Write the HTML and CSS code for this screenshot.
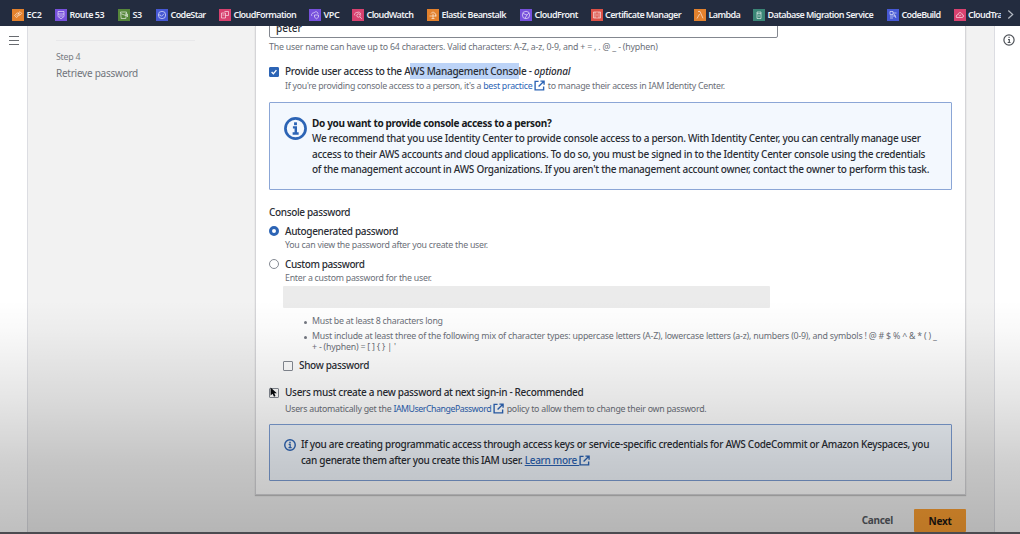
FILE: index.html
```html
<!DOCTYPE html>
<html lang="en">
<head>
<meta charset="utf-8">
<title>Create user | IAM</title>
<link rel="stylesheet" href="styles.css">
</head>
<body>
<svg width="0" height="0" class="defs">
  <symbol id="ext" viewBox="0 0 12 12"><path d="M5 1.5H1.2v9.3h9.3V7M7 1.2h4v4M11 1.2 5 7.2" fill="none" stroke="currentColor" stroke-width="1.5"/></symbol>
  <symbol id="info" viewBox="0 0 16 16"><circle cx="8" cy="8" r="7" fill="none" stroke="currentColor" stroke-width="1.9"/><path d="M6.2 7.2h2v4.2M6 11.5h4.2" fill="none" stroke="currentColor" stroke-width="1.700"/><path d="M7 3.7h2v2H7z" fill="currentColor"/></symbol>
</svg>
<nav class="favorites">
  <a class="fav ec2"><svg class="orange" viewBox="0 0 12 12"><path d="M2.700 6.500 5.500 3.700l2 2-2.800 2.800zM6 4.500 8 2.700l1.700 1.700-2.200 2.200M4.500 7l3-3"/></svg><span>EC2</span></a>
  <a class="fav r53"><svg class="purple" viewBox="0 0 12 12"><path d="M3 2.5h6v5L6 9.8 3 7.5zM3 5h6M4 7h4"/></svg><span>Route 53</span></a>
  <a class="fav s3"><svg class="green" viewBox="0 0 12 12"><path d="M2.5 3h6l-.7 6.5H3.2zM3 4.7l6.5 2.5M7 5h2.5v3"/></svg><span>S3</span></a>
  <a class="fav star"><svg class="blue" viewBox="0 0 12 12"><circle cx="6" cy="6" r="3.7"/><path d="m4 5.8 1.5 1.5L8 4.8M2.5 6h2"/></svg><span>CodeStar</span></a>
  <a class="fav cfn"><svg class="pink" viewBox="0 0 12 12"><path d="M2.5 4h4v5h-4zM5.5 2.5h4v4h-3M3.5 6h2"/></svg><span>CloudFormation</span></a>
  <a class="fav vpc"><svg class="purple" viewBox="0 0 12 12"><path d="M3 7C1.5 5 4 3.5 5 4c1-2 4-1.5 4 1M5.5 6h4v2.2l-2 1.6-2-1.6z"/></svg><span>VPC</span></a>
  <a class="fav cw"><svg class="pink" viewBox="0 0 12 12"><path d="M3 6.5C1.5 5 4 3.2 5 3.5c1.5-1 4 0 3.6 2"/><circle cx="6.5" cy="6.5" r="1.7"/><path d="m8 8 1.8 1.8"/></svg><span>CloudWatch</span></a>
  <a class="fav eb"><svg class="orange" viewBox="0 0 12 12"><path d="M2.5 7h7M4 4.5c1-2 4-1.5 4 .5 1.5 0 1.5 2 0 2M6 4.5v5M4.5 9.5h3"/></svg><span>Elastic Beanstalk</span></a>
  <a class="fav cf"><svg class="purple" viewBox="0 0 12 12"><circle cx="6" cy="6" r="3.7"/><path d="M3 4.5 7 6l2-2M7 6 5 9.3"/></svg><span>CloudFront</span></a>
  <a class="fav cm"><svg class="red" viewBox="0 0 12 12"><path d="M2.5 3h7v6h-7zM4 3v6M8 3v6M6 4.5v3"/></svg><span>Certificate Manager</span></a>
  <a class="fav lam"><svg class="orange" viewBox="0 0 12 12"><path d="M4 2.5h2L9 9.3M5.6 5 3 9.5"/></svg><span>Lambda</span></a>
  <a class="fav dms"><svg class="teal" viewBox="0 0 12 12"><path d="M4 3h4v6.5H4zM4 4.7h4M5 7h2"/></svg><span>Database Migration Service</span></a>
  <a class="fav cb"><svg class="blue" viewBox="0 0 12 12"><path d="M3 2.5h3v3H3zM6 4h3.5M3 7h6M3 9h3M7 5l2 4"/></svg><span>CodeBuild</span></a>
  <a class="fav trail"><svg class="pink" viewBox="0 0 12 12"><path d="M2.5 8.5c-1-2.5 1-3 1.5-2.6C4 2.8 8 3 8 5.5c2 0 2 3 0 3zM5 7l2-1"/></svg><span>CloudTrail</span></a>
  <svg class="more" viewBox="0 0 8 12"><path d="m1.5 1.5 5 4.5-5 4.5"/></svg>
</nav>

<div class="page">
  <aside class="rail left"><div class="burger"><i></i><i></i><i></i></div></aside>
  <aside class="steps">
    <div class="rule"></div>
    <div class="step-no small">Step 4</div>
    <div class="step-name">Retrieve password</div>
  </aside>
  <main class="content">
    <section class="panel">
      <div class="name-clip"><div class="name-input">peter</div></div>
      <div class="small constraint">The user name can have up to 64 characters. Valid characters: A-Z, a-z, 0-9, and + = , . @ _ - (hyphen)</div>

      <div class="choice provide"><span class="box on"><svg viewBox="0 0 10 10"><path d="m2 5 2.2 2.3L8 2.6"/></svg></span><span>Provide user access to the A<mark>WS Management Conso</mark>le - <em>optional</em></span></div>
      <div class="small desc provide-desc">If you're providing console access to a person, it's a <a>best practice <svg class="ext"><use href="#ext"/></svg></a> to manage their access in IAM Identity Center.</div>

      <div class="alert person">
        <svg class="big-info"><use href="#info"/></svg>
        <div>
          <b>Do you want to provide console access to a person?</b>
          <p>We recommend that you use Identity Center to provide console access to a person. With Identity Center, you can centrally manage user<br>access to their AWS accounts and cloud applications. To do so, you must be signed in to the Identity Center console using the credentials<br>of the management account in AWS Organizations. If you aren't the management account owner, contact the owner to perform this task.</p>
        </div>
      </div>

      <div class="group-label">Console password</div>
      <div class="choice auto"><span class="radio on"></span><span>Autogenerated password</span></div>
      <div class="small desc auto-desc">You can view the password after you create the user.</div>
      <div class="choice custom"><span class="radio"></span><span>Custom password</span></div>
      <div class="small desc custom-desc">Enter a custom password for the user.</div>
      <div class="password"></div>
      <ul class="rules small">
        <li class="length">Must be at least 8 characters long</li>
        <li class="mix">Must include at least three of the following mix of character types: uppercase letters (A-Z), lowercase letters (a-z), numbers (0-9), and symbols ! @ # $ % ^ &amp; * ( ) _<br>+ - (hyphen) = [ ] { } | '</li>
      </ul>
      <div class="choice show"><span class="box"></span><span>Show password</span></div>
      <div class="choice reset"><span class="box"></span><span>Users must create a new password at next sign-in - Recommended</span>
        <svg class="pointer" viewBox="0 0 8 11"><path d="M.6.5v8l2-1.7 1.4 3 1.5-.7L4.200 6.300h2.700z"/></svg>
      </div>
      <div class="small desc reset-desc">Users automatically get the <a><span class="policy">IAMUserChangePassword</span> <svg class="ext"><use href="#ext"/></svg></a> policy to allow them to change their own password.</div>

      <div class="alert keys">
        <svg class="small-info"><use href="#info"/></svg>
        <p>If you are creating programmatic access through access keys or service-specific credentials for AWS CodeCommit or Amazon Keyspaces, you<br>can generate them after you create this IAM user. <a class="learn">Learn more <svg class="ext"><use href="#ext"/></svg></a></p>
      </div>
    </section>
    <div class="actions"><span class="cancel">Cancel</span><span class="next">Next</span></div>
  </main>
  <aside class="rail right"><svg class="rail-info" viewBox="0 0 12 12"><circle cx="6" cy="6" r="5.100"/><path d="M5 5.500h1.300v3M4.700 8.500h2.800M5.500 3.400h1.200"/></svg></aside>
</div>
<div class="shade"></div>
</body>
</html>
```
FILE: styles.css
```css
* { box-sizing: border-box; }
body {
  margin: 0; width: 1020px; height: 534px; overflow: hidden; position: relative;
  display: flex; flex-direction: column;
  font: 500 10px/15.6px "Noto Sans", "Open Sans", sans-serif;
  letter-spacing: -.28px; color: #2a2d34; background: #fff;
}
p { margin: 0; }
a { color: #2c64b5; }
.defs { position: absolute; }

.favorites {
  height: 26px; flex: none; display: flex; align-items: center; padding: 3px 0 0 12px;
  background: #232c3f; color: #eef0f3; font-size: 9px; font-weight: 600;
  line-height: 14px; letter-spacing: -.6px; white-space: nowrap; position: relative;
}
.fav { display: flex; align-items: center; gap: 2.500px; color: inherit; flex: none; }
.fav svg { width: 12px; height: 12px; flex: none; fill: none; stroke: #fff; stroke-opacity: .65; stroke-width: .9; }
.fav.ec2 { width: 43px; letter-spacing: -.3px; }
.fav.r53 { width: 63px; letter-spacing: -.51px; }
.fav.s3 { width: 38px; letter-spacing: -.5px; }
.fav.star { width: 63px; }
.fav.cfn { width: 90px; }
.fav.vpc { width: 43px; letter-spacing: -.4px; }
.fav.cw { width: 75px; }
.fav.eb { width: 93px; letter-spacing: -.54px; }
.fav.cf { width: 70.500px; letter-spacing: -.55px; }
.fav.cm { width: 103.500px; }
.fav.lam { width: 59px; }
.fav.dms { width: 134px; letter-spacing: -.57px; }
.fav.cb { width: 66.500px; letter-spacing: -.63px; }
.fav.trail { width: 47.500px; overflow: hidden; }
.orange { background: #e2812d; }
.purple { background: #7650dc; }
.green { background: #56873a; }
.blue { background: #4658d4; }
.pink { background: #d8416f; }
.red { background: #dc5046; }
.teal { background: #3a8576; }
.more { width: 7px; height: 11px; margin-left: 6px; fill: none; stroke: #b3b9c3; stroke-width: 1.4; }

.page { flex: 1; display: flex; min-height: 0; background: #f2f2f2; }
.rail { background: #fff; flex: none; display: flex; justify-content: center; align-items: flex-start; }
.left { width: 28px; border-right: 1px solid #dcdde2; }
.right { width: 26px; border-left: 1px solid #dcdde2; padding: 8px 0 0 3px; }
.burger { display: grid; gap: 2.500px; padding: 9.500px 0 0; width: 10px; }
.burger i { height: 1.500px; background: #686b70; }
.rail-info { width: 12px; height: 12px; fill: none; stroke: #4d5157; stroke-width: 1.2; }
.steps { width: 227px; padding: 14px 28px 0; color: #71757c; font-weight: 400; }
.rule { height: 1px; width: 139px; background: #e8e8ea; }
.step-no { margin-top: 8px; height: 16.500px; letter-spacing: -.1px; }
.step-name { letter-spacing: -.25px; }
.small { font-size: 8.800px; font-weight: 400; color: #6b6f78; letter-spacing: -.25px; line-height: 11px; }
.step-no.small { line-height: 16px; color: #777b82; }

.content { width: 739px; display: flex; flex-direction: column; }
.panel {
  width: 711px; height: 469px; padding: 0 14px 0 13px; background: #fff; flex: none; white-space: nowrap;
  border: solid #d5d5d8; border-width: 0 1px 1px; box-shadow: 0 1px 1px #0003;
}
.name-clip { height: 12px; overflow: hidden; display: flex; align-items: flex-end; }
.name-input { width: 509px; height: 25px; flex: none; padding: 7px 6px 0; line-height: 14px; border: 1px solid #83878f; border-radius: 2px; letter-spacing: 0; }
.panel > .small.constraint { line-height: 18px; height: 18px; letter-spacing: -.2px; }
.choice { display: flex; align-items: center; gap: 6px; height: 17px; line-height: 17px; letter-spacing: -.35px; position: relative; }
.provide { margin-top: 7px; letter-spacing: -.285px; }
mark { background: #bcd3f7; color: inherit; padding: 1px 0; }
em { letter-spacing: -.2px; }
.box { width: 10px; height: 10px; border: 1px solid #858a93; border-radius: 1px; background: #fff; flex: none; }
.box.on { background: #2c64b5; border-color: #2c64b5; display: flex; }
.box svg { width: 8px; height: 8px; fill: none; stroke: #fff; stroke-width: 1.700; }
.radio { width: 10px; height: 10px; border: 1px solid #858a93; border-radius: 50%; background: #fff; flex: none; }
.radio.on { border: 3px solid #2c64b5; }
.desc { padding-left: 16px; height: 11px; }
.provide-desc { letter-spacing: -.275px; margin-top: -.5px; }
.ext { width: 11px; height: 11px; vertical-align: -2px; margin: 0 .500px 0 0; }
.alert { border: 1px solid #8ba6d6; background: #f3f8fe; display: flex; margin: 0 -1px 0 0; border-radius: 1px; }
.alert.person { height: 88px; margin-top: 11.500px; padding: 12.500px 14px; gap: 5px; }
.person b { display: block; letter-spacing: -.32px; height: 15.600px; color: #171a20; }
.person p { letter-spacing: -.279px; }
.big-info { width: 23px; height: 23px; margin: 1px 0 0; color: #2c64b5; flex: none; }
.group-label { margin-top: 14px; height: 18.500px; line-height: 17px; letter-spacing: -.35px; }
.auto-desc { margin-top: 0; }
.custom { margin-top: 5px; letter-spacing: -.4px; }
.custom-desc { margin-top: 0; }
.password { width: 487px; height: 22px; background: #ebebeb; margin: 2.500px 0 0 14px; border-radius: 1px; }
.rules { margin: 8px 0 0; padding: 0 0 0 43px; list-style: none; }
.rules li { position: relative; }
.rules li::before { content: ""; position: absolute; left: -8px; top: 4.500px; width: 3px; height: 3px; border-radius: 50%; background: #737780; }
.rules .mix { margin-top: 4px; letter-spacing: -.21px; }
.show { margin: 4px 0 0 14px; letter-spacing: -.33px; }
.reset { margin-top: 10px; letter-spacing: -.305px; }
.pointer { position: absolute; left: 1px; top: 3px; width: 8px; height: 11px; fill: #090b0e; }
.reset-desc { margin-top: 1.500px; }
.policy { letter-spacing: -.46px; }
.alert.keys { height: 57px; margin-top: 10.500px; padding: 12px 14px; gap: 5px; letter-spacing: -.301px; border-color: #7d9ed4; }
.small-info { width: 12px; height: 12px; margin-top: 2px; color: #2c64b5; flex: none; }
.learn { text-decoration: underline; }
.actions { display: flex; justify-content: flex-end; align-items: center; width: 711px; margin-top: 14px; height: 23px; gap: 21px; font-weight: 700; }
.cancel { color: #565a61; line-height: 23px; }
.next { width: 52px; height: 23px; line-height: 24px; text-align: center; background: #fb9f32; border-radius: 1px; color: #1b1611; }
.shade {
  position: absolute; inset: 300px 0 0; pointer-events: none; border-bottom: 2px solid #4b4b50;
  background: linear-gradient(#0000, #00000006 13%, #0000001a 43%, #00000030 71%, #00000040);
}
```
